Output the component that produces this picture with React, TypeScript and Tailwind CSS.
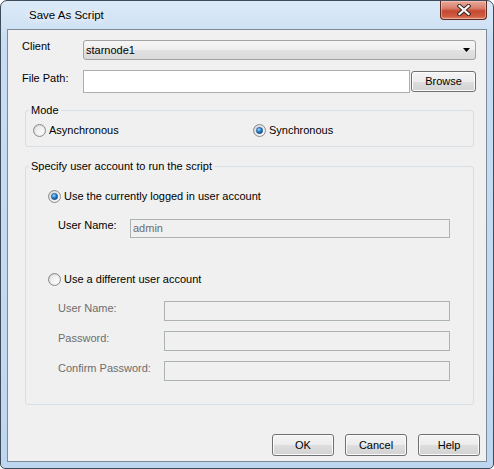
import React from 'react';

interface RadioProps {
  label: string;
  checked?: boolean;
}

function RadioMark({ checked }: { checked?: boolean }) {
  return (
    <svg width="13" height="13" viewBox="0 0 13 13" className="shrink-0">
      <defs>
        <linearGradient id="radio-face" x1="0" y1="0" x2="1" y2="1">
          <stop offset="0" stopColor="#cfcfcf" />
          <stop offset="1" stopColor="#fbfbfb" />
        </linearGradient>
        <linearGradient id="radio-inner" x1="0" y1="0" x2="1" y2="1">
          <stop offset="0" stopColor="#e6e6e6" />
          <stop offset="1" stopColor="#ffffff" />
        </linearGradient>
        <radialGradient id="radio-dot" cx="0.4" cy="0.35" r="0.7">
          <stop offset="0" stopColor="#a9dcfb" />
          <stop offset="0.45" stopColor="#2d86d4" />
          <stop offset="1" stopColor="#0b3f78" />
        </radialGradient>
      </defs>
      <circle cx="6.5" cy="6.5" r="6" fill="url(#radio-face)" stroke="#8b8b8b" strokeWidth="1" />
      <circle cx="6.5" cy="6.5" r="4.3" fill="url(#radio-inner)" />
      {checked && <circle cx="6.5" cy="6.5" r="3.2" fill="url(#radio-dot)" stroke="#1c4f80" strokeWidth="0.5" />}
    </svg>
  );
}

function Radio({ label, checked }: RadioProps) {
  return (
    <span className="flex h-[13px] items-center gap-[3px]">
      <RadioMark checked={checked} />
      <span>{label}</span>
    </span>
  );
}

function PushButton({ label, className = '' }: { label: string; className?: string }) {
  return (
    <button
      className={`flex items-center justify-center rounded-[3px] border border-[#707070] bg-[linear-gradient(#f4f4f4,#ececec_50%,#dedede_50%,#d2d2d2)] text-black shadow-[inset_0_0_0_1px_#fbfbfb] ${className}`}
    >
      {label}
    </button>
  );
}

function CloseButton() {
  return (
    <div className="flex h-[19px] w-[47px] items-center justify-center rounded-b-[4px] border border-t-0 border-[#5b2a22] bg-[linear-gradient(#e9a99a,#d8806c_40%,#c44a31_55%,#d05a3f_85%,#e48a6e)] shadow-[inset_0_0_0_1px_rgba(255,220,210,0.45)]">
      <svg width="14" height="12" viewBox="0 0 14 12">
        <path d="M2.5 2 L11.5 10 M11.5 2 L2.5 10" stroke="#3a2622" strokeWidth="4.2" strokeLinecap="square" />
        <path d="M2.5 2 L11.5 10 M11.5 2 L2.5 10" stroke="#ffffff" strokeWidth="2.2" strokeLinecap="square" />
      </svg>
    </div>
  );
}

// group box: caption sits on the top border line
function GroupBox({ title, className = '', children }: { title: string; className?: string; children: React.ReactNode }) {
  return (
    <div className={`mr-[12px] ml-[17px] rounded-[3px] border border-[#d5dfe5] ${className}`}>
      <span className="-mt-[7px] ml-[3px] block w-fit bg-[#f0f0f0] px-[2px]">{title}</span>
      {children}
    </div>
  );
}

function DisabledRow({ label, className = '' }: { label: string; className?: string }) {
  return (
    <div className={`flex items-start pl-[32px] ${className}`}>
      <span className="mt-px w-[106px] text-[#6d6d6d]">{label}</span>
      <div className="h-[20px] w-[286px] border border-[#adb2b5] bg-[#f0f0f0]" />
    </div>
  );
}

export default function App() {
  return (
    <div className="h-[469px] w-[494px] font-['Liberation_Sans',Arial,sans-serif] text-[11px] leading-[13px] text-black">
      <div className="flex h-full flex-col rounded-t-[7px] rounded-b-[5px] border border-[#3e4b58] bg-[linear-gradient(#dceaf7,#c8ddf3_40px,#bed7f1)] px-[6px] pb-[6px]">
        {/* title bar */}
        <div className="flex h-[28px] items-start justify-between">
          <span className="mt-[7px] ml-[22px] text-[11.5px] leading-[15px] [text-shadow:0_0_8px_#fff,0_0_8px_#fff]">
            Save As Script
          </span>
          <CloseButton />
        </div>

        {/* dialog body */}
        <div className="flex flex-1 flex-col border border-[#7d8a98] bg-[#f0f0f0]">
          <div className="flex flex-col pt-[10px] pr-[10px] pl-[14px]">
            <div className="flex items-start">
              <span className="w-[61px]">Client</span>
              <div className="flex h-[20px] w-[393px] items-center justify-between rounded-[3px] border border-[#a3a3a3] bg-[linear-gradient(#f6f6f6,#eeeeee_50%,#e2e2e2_50%,#dadada)] pr-[5px] pl-[2px]">
                <span>starnode1</span>
                <svg width="7" height="4" viewBox="0 0 7 4">
                  <path d="M0 0 H7 L3.5 4 Z" fill="#000" />
                </svg>
              </div>
            </div>
            <div className="mt-[10px] flex items-start">
              <span className="mt-[2px] w-[61px]">File Path:</span>
              <div className="h-[23px] w-[327px] border border-[#abadb3] bg-white" />
              <PushButton label="Browse" className="mt-px ml-px h-[21px] w-[65px]" />
            </div>
          </div>

          <GroupBox title="Mode" className="mt-[17px] pb-[9px]">
            <div className="mt-[7px] flex pl-[7px]">
              <div className="w-[220px]">
                <Radio label="Asynchronous" />
              </div>
              <Radio label="Synchronous" checked />
            </div>
          </GroupBox>

          <GroupBox title="Specify user account to run the script" className="mt-[19px] pb-[23px]">
            <div className="mt-[17px] pl-[22px]">
              <Radio label="Use the currently logged in user account" checked />
            </div>
            <div className="mt-[16px] flex items-start pl-[32px]">
              <span className="w-[72px]">User Name:</span>
              <div className="flex h-[19px] w-[320px] items-center border border-[#adb2b5] bg-[#f0f0f0] pl-[2px] text-[#6d6d6d]">
                admin
              </div>
            </div>
            <div className="mt-[35px] pl-[22px]">
              <Radio label="Use a different user account" />
            </div>
            <DisabledRow label="User Name:" className="mt-[15px]" />
            <DisabledRow label="Password:" className="mt-[10px]" />
            <DisabledRow label="Confirm Password:" className="mt-[10px]" />
          </GroupBox>

          <div className="mt-[29px] flex justify-end gap-[11px] pr-[6px]">
            <PushButton label="OK" className="h-[22px] w-[62px]" />
            <PushButton label="Cancel" className="h-[22px] w-[62px]" />
            <PushButton label="Help" className="h-[22px] w-[62px]" />
          </div>
        </div>
      </div>
    </div>
  );
}
